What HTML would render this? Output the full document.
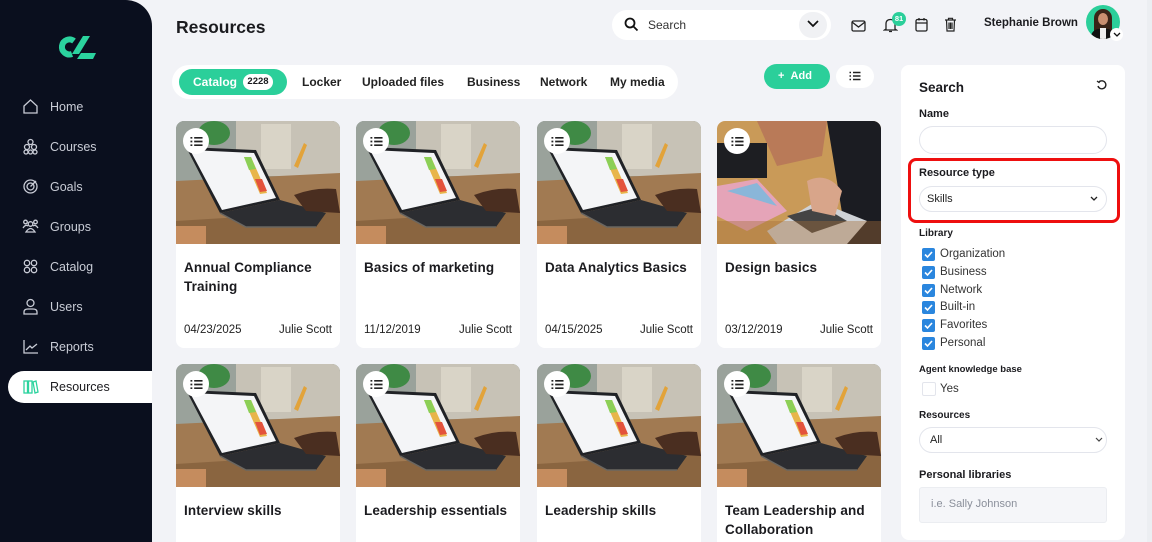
<!DOCTYPE html>
<html style="width:1152px;height:542px;overflow:hidden"><head><meta charset="utf-8">
<style>
*{box-sizing:border-box;margin:0;padding:0}
body{width:1152px;height:542px;overflow:hidden;background:#f2f3f7;font-family:"Liberation Sans",sans-serif;color:#1b1b1f;position:relative}
.side{position:absolute;left:0;top:0;width:152px;height:542px;background:#0a0f1e;border-top-right-radius:26px}
.nav{position:absolute;left:22px;color:#c9ccd6;font-size:12.5px;display:flex;align-items:center;gap:11px}
.nav svg{width:17px;height:17px;stroke:#c9ccd6;fill:none;stroke-width:1.3}
.active{position:absolute;left:8px;top:371px;width:144px;height:32px;background:#fff;border-radius:16px 0 0 16px}
.abs{position:absolute}
.card{position:absolute;width:164px;background:#fff;border-radius:8px;overflow:hidden}
.card .img{height:123px;position:relative}
.card h3{font-size:13.5px;font-weight:bold;line-height:18.5px;padding:15px 8px 0;letter-spacing:0.1px}
.meta{position:absolute;left:8px;right:8px;top:203px;font-size:11.5px;display:flex;justify-content:space-between;color:#222}
.li{position:absolute;left:7px;top:7px;width:26px;height:26px;border-radius:50%;background:#fff;display:flex;align-items:center;justify-content:center}
.tab{position:absolute;top:75px;font-size:12px;font-weight:bold;color:#222}
.lbl{position:absolute;left:919px;font-size:10.5px;font-weight:bold}
.cb{position:absolute;left:922px;width:13px;height:13px;border-radius:2px;background:#2a86de}
.cbt{position:absolute;left:940px;font-size:11.5px;color:#333}
.inp{position:absolute;left:919px;width:188px;border:1px solid #e3e5ec;border-radius:15px;background:#fff}
</style></head><body>
<div class="side">
 <svg class="abs" style="left:55px;top:33px" width="42" height="28" viewBox="0 0 42 28"><path d="M19 8 A7.5 7.5 0 1 0 17 21" fill="none" stroke="#2bd39e" stroke-width="6" stroke-linecap="butt"/><path d="M28 3 L35 3 L24 21 L17 21 Z" fill="#2bd39e"/><path d="M26 20 L41 20 L38 26 L22 26 Z" fill="#2bd39e"/></svg>
 <div class="active"></div>
 <div class="nav" style="top:98px"><svg viewBox="0 0 17 17"><path d="M2 8 L8.5 2 L15 8 V15 H2 Z"/></svg>Home</div>
 <div class="nav" style="top:138px"><svg viewBox="0 0 17 17"><circle cx="8.5" cy="4" r="2.5"/><circle cx="5" cy="9" r="2.5"/><circle cx="12" cy="9" r="2.5"/><circle cx="4" cy="14" r="2"/><circle cx="8.5" cy="14" r="2"/><circle cx="13" cy="14" r="2"/></svg>Courses</div>
 <div class="nav" style="top:178px"><svg viewBox="0 0 17 17"><circle cx="8.5" cy="8.5" r="6.5"/><circle cx="8.5" cy="8.5" r="3.5"/><path d="M8.5 8.5 L14 3"/></svg>Goals</div>
 <div class="nav" style="top:218px"><svg viewBox="0 0 17 17"><circle cx="8.5" cy="6" r="2.3"/><circle cx="3.5" cy="4" r="1.8"/><circle cx="13.5" cy="4" r="1.8"/><path d="M4 14 Q8.5 7 13 14 Z M1 10 Q3.5 6 6 8 M11 8 Q13.5 6 16 10"/></svg>Groups</div>
 <div class="nav" style="top:258px"><svg viewBox="0 0 17 17"><circle cx="5" cy="5" r="2.7"/><circle cx="12" cy="5" r="2.7"/><circle cx="5" cy="12" r="2.7"/><circle cx="12" cy="12" r="2.7"/></svg>Catalog</div>
 <div class="nav" style="top:298px"><svg viewBox="0 0 17 17"><circle cx="8.5" cy="5" r="3.5"/><path d="M2 16 V14 Q2 11 6 11 H11 Q15 11 15 14 V16 Z"/></svg>Users</div>
 <div class="nav" style="top:338px"><svg viewBox="0 0 17 17"><path d="M2 2 V15 H16 M4 12 L8 8 L10 10 L15 6"/></svg>Reports</div>
 <div class="nav" style="top:378px;color:#1b1b1f"><svg viewBox="0 0 17 17" style="stroke:#2bd39e"><rect x="2" y="3" width="3.5" height="12"/><rect x="6.5" y="3" width="3.5" height="12"/><path d="M11 4 L14 3 L16 14 L13 15 Z"/></svg>Resources</div>
</div>

<div class="abs" style="left:176px;top:17px;font-size:17.5px;font-weight:bold">Resources</div>

<div class="abs" style="left:612px;top:10px;width:219px;height:30px;background:#fff;border-radius:15px"></div>
<svg class="abs" style="left:624px;top:17px" width="15" height="15" viewBox="0 0 15 15"><circle cx="6" cy="6" r="4.5" fill="none" stroke="#111" stroke-width="1.8"/><path d="M9.5 9.5 L13.5 13.5" stroke="#111" stroke-width="1.8"/></svg>
<div class="abs" style="left:648px;top:18px;font-size:12px;color:#333">Search</div>
<div class="abs" style="left:799px;top:12px;width:28px;height:26px;border-radius:13px;background:#f0f1f4"></div>
<svg class="abs" style="left:807px;top:20px" width="12" height="8" viewBox="0 0 12 8"><path d="M1 1 L6 6 L11 1" fill="none" stroke="#111" stroke-width="1.7"/></svg>
<svg class="abs" style="left:851px;top:20px" width="15" height="12" viewBox="0 0 15 12"><rect x="1" y="1" width="13" height="10" rx="1.5" fill="none" stroke="#222" stroke-width="1.3"/><path d="M1 2 L7.5 7 L14 2" fill="none" stroke="#222" stroke-width="1.3"/></svg>
<svg class="abs" style="left:883px;top:17px" width="15" height="16" viewBox="0 0 15 16"><path d="M3 12 V7 Q3 2.5 7.5 2.5 Q12 2.5 12 7 V12 L13.5 13 H1.5 Z M6 14.5 H9" fill="none" stroke="#222" stroke-width="1.3"/></svg>
<div class="abs" style="left:892px;top:12px;width:14px;height:14px;border-radius:7px;background:#2bcf9a;color:#fff;font-size:7.5px;font-weight:bold;text-align:center;line-height:14px">81</div>
<svg class="abs" style="left:915px;top:17px" width="13" height="15" viewBox="0 0 13 15"><rect x="1" y="2.5" width="11" height="11.5" rx="1.5" fill="none" stroke="#222" stroke-width="1.3"/><path d="M1 6 H12 M4 1 V3.5 M9 1 V3.5" stroke="#222" stroke-width="1.3"/></svg>
<svg class="abs" style="left:944px;top:17px" width="13" height="15" viewBox="0 0 13 15"><path d="M1 3 H12 M4.5 3 V1.3 H8.5 V3 M2.5 3 L3 14 H10 L10.5 3 M5 5.5 V12 M6.5 5.5 V12 M8 5.5 V12" fill="none" stroke="#222" stroke-width="1.2"/></svg>
<div class="abs" style="left:984px;top:17px;font-size:11.5px;font-weight:bold">Stephanie Brown</div>
<div class="abs" style="left:1086px;top:5px;width:34px;height:34px;border-radius:50%;background:#2bcf9a;overflow:hidden">
 <div style="position:absolute;left:8px;top:4px;width:18px;height:30px;border-radius:9px 9px 0 0;background:#3a2418"></div>
 <div style="position:absolute;left:12px;top:8px;width:10px;height:12px;border-radius:50%;background:#c98f70"></div>
 <div style="position:absolute;left:5px;top:24px;width:24px;height:14px;border-radius:8px 8px 0 0;background:#111"></div>
 <div style="position:absolute;left:14px;top:23px;width:6px;height:12px;background:#eee"></div>
</div>
<div class="abs" style="left:1110px;top:28px;width:13px;height:13px;border-radius:50%;background:#fff"></div>
<svg class="abs" style="left:1113px;top:32px" width="8" height="6" viewBox="0 0 8 6"><path d="M1 1 L4 4 L7 1" fill="none" stroke="#111" stroke-width="1.3"/></svg>

<div class="abs" style="left:172px;top:65px;width:506px;height:34px;background:#fff;border-radius:17px"></div>
<div class="abs" style="left:179px;top:69px;width:108px;height:26px;background:#2bcf9a;border-radius:13px"></div>
<div class="tab" style="left:193px;color:#fff">Catalog</div>
<div class="abs" style="left:243px;top:74px;width:30px;height:16px;background:#fff;border-radius:8px;font-size:9.5px;font-weight:bold;text-align:center;line-height:16px">2228</div>
<div class="tab" style="left:302px">Locker</div>
<div class="tab" style="left:362px">Uploaded files</div>
<div class="tab" style="left:467px">Business</div>
<div class="tab" style="left:540px">Network</div>
<div class="tab" style="left:610px">My media</div>

<div class="abs" style="left:764px;top:64px;width:66px;height:25px;background:#2bcf9a;border-radius:13px;color:#fff;font-size:11px;font-weight:bold;line-height:25px;padding-left:14px">+&nbsp;&nbsp;Add</div>
<div class="abs" style="left:836px;top:65px;width:38px;height:23px;background:#fff;border-radius:12px"></div>
<svg class="abs" style="left:849px;top:71px" width="12" height="10" viewBox="0 0 12 10"><path d="M0.5 1.5 H2 M4 1.5 H11.5 M0.5 5 H2 M4 5 H11.5 M0.5 8.5 H2 M4 8.5 H11.5" stroke="#222" stroke-width="1.4"/></svg>

<svg width="0" height="0" style="position:absolute">
 <defs>
  <symbol id="lap" viewBox="0 0 164 123">
   <rect width="164" height="123" fill="#8e9691"/>
   <rect x="0" y="0" width="164" height="60" fill="#9aa29b"/>
   <rect x="60" y="0" width="104" height="55" fill="#c7c2b6"/>
   <rect x="85" y="3" width="30" height="45" fill="#d9d4c7"/>
   <ellipse cx="38" cy="12" rx="16" ry="12" fill="#3f8a45"/>
   <path d="M0 60 L164 52 L164 123 L0 123 Z" fill="#a17a52"/>
   <path d="M0 100 L164 90 L164 123 L0 123 Z" fill="#8a6540"/>
   <rect x="0" y="105" width="30" height="18" fill="#c58c5e"/>
   <path d="M10 26 L80 29 L104 79 L44 92 Z" fill="#202226"/>
   <path d="M14 29 L78 32 L100 77 L46 89 Z" fill="#f4f5f7"/>
   <path d="M68 36 L75 36 L91 72 L84 73 Z" fill="#e8b54a"/>
   <path d="M68 36 L75 36 L80 48 L73 49 Z" fill="#8ccf56"/>
   <path d="M79 58 L86 58 L91 70 L84 71 Z" fill="#e3533c"/>
   <path d="M44 92 L104 79 L150 92 L140 106 L70 106 Z" fill="#2c2d31"/>
   <path d="M44 92 L70 106 L140 106" fill="none" stroke="#6a6660" stroke-width="1.5"/>
   <path d="M118 74 Q138 66 160 68 L164 92 L130 90 Z" fill="#4a2e20"/>
   <path d="M118 45 L128 22 L131 24 L122 47 Z" fill="#e2a33a"/>
  </symbol>
  <symbol id="lst" viewBox="0 0 14 11"><path d="M0.5 1.5 H2.5 M4.5 1.5 H13.5 M0.5 5.5 H2.5 M4.5 5.5 H13.5 M0.5 9.5 H2.5 M4.5 9.5 H13.5" stroke="#222" stroke-width="1.8"/></symbol>
 </defs>
</svg>

<div class="card" style="left:176px;top:121px;height:227px"><div class="img"><svg width="164" height="123"><use href="#lap" width="164" height="123"/></svg><div class="li"><svg width="13" height="11"><use href="#lst" width="13" height="11"/></svg></div></div><h3>Annual Compliance Training</h3><div class="meta"><span>04/23/2025</span><span>Julie Scott</span></div></div>
<div class="card" style="left:356px;top:121px;height:227px"><div class="img"><svg width="164" height="123"><use href="#lap" width="164" height="123"/></svg><div class="li"><svg width="13" height="11"><use href="#lst" width="13" height="11"/></svg></div></div><h3>Basics of marketing</h3><div class="meta"><span>11/12/2019</span><span>Julie Scott</span></div></div>
<div class="card" style="left:537px;top:121px;height:227px"><div class="img"><svg width="164" height="123"><use href="#lap" width="164" height="123"/></svg><div class="li"><svg width="13" height="11"><use href="#lst" width="13" height="11"/></svg></div></div><h3>Data Analytics Basics</h3><div class="meta"><span>04/15/2025</span><span>Julie Scott</span></div></div>
<div class="card" style="left:717px;top:121px;height:227px"><div class="img">
 <svg width="164" height="123" viewBox="0 0 164 123"><rect width="164" height="123" fill="#c99a58"/><path d="M40 0 H110 L105 35 L60 45 Z" fill="#b97a58"/><path d="M110 0 H164 V123 H130 Q120 60 110 0 Z" fill="#1b1c22"/><path d="M0 65 L40 58 L70 90 L30 110 L0 95 Z" fill="#e5a4b8"/><path d="M10 70 L40 62 L60 85 Z" fill="#8ab6d9"/><rect x="0" y="22" width="50" height="35" fill="#1d1e22"/><path d="M50 110 L100 80 L150 100 L130 123 L60 123 Z" fill="#cfd2d6"/><path d="M70 95 L105 85 L130 100 L95 112 Z" fill="#444"/><path d="M90 60 Q110 50 125 70 L118 95 L95 90 Z" fill="#d8a58a"/><rect x="0" y="100" width="164" height="23" fill="#a56e3a" opacity=".4"/></svg>
 <div class="li"><svg width="13" height="11"><use href="#lst" width="13" height="11"/></svg></div></div><h3>Design basics</h3><div class="meta"><span>03/12/2019</span><span>Julie Scott</span></div></div>

<div class="card" style="left:176px;top:364px;height:178px;border-radius:8px 8px 0 0"><div class="img"><svg width="164" height="123"><use href="#lap" width="164" height="123"/></svg><div class="li"><svg width="13" height="11"><use href="#lst" width="13" height="11"/></svg></div></div><h3>Interview skills</h3></div>
<div class="card" style="left:356px;top:364px;height:178px;border-radius:8px 8px 0 0"><div class="img"><svg width="164" height="123"><use href="#lap" width="164" height="123"/></svg><div class="li"><svg width="13" height="11"><use href="#lst" width="13" height="11"/></svg></div></div><h3>Leadership essentials</h3></div>
<div class="card" style="left:537px;top:364px;height:178px;border-radius:8px 8px 0 0"><div class="img"><svg width="164" height="123"><use href="#lap" width="164" height="123"/></svg><div class="li"><svg width="13" height="11"><use href="#lst" width="13" height="11"/></svg></div></div><h3>Leadership skills</h3></div>
<div class="card" style="left:717px;top:364px;height:178px;border-radius:8px 8px 0 0"><div class="img"><svg width="164" height="123"><use href="#lap" width="164" height="123"/></svg><div class="li"><svg width="13" height="11"><use href="#lst" width="13" height="11"/></svg></div></div><h3>Team Leadership and Collaboration</h3></div>

<div class="abs" style="left:901px;top:65px;width:224px;height:475px;background:#fff;border-radius:8px"></div>
<div class="abs" style="left:919px;top:80px;font-size:13.5px;font-weight:bold">Search</div>
<svg class="abs" style="left:1096px;top:80px" width="11" height="11" viewBox="0 0 11 11"><path d="M3 2 A4 4 0 1 1 2 6" fill="none" stroke="#222" stroke-width="1.4"/><path d="M1 1 L3 2.5 L4.5 0.5" fill="none" stroke="#222" stroke-width="1.3"/></svg>
<div class="lbl" style="top:108px;font-size:11px">Name</div>
<div class="inp" style="top:126px;height:28px"></div>
<div class="abs" style="left:908px;top:158px;width:212px;height:65px;border:3.5px solid #ee0f0f;border-radius:8px"></div>
<div class="lbl" style="top:167px;font-size:11px">Resource type</div>
<div class="inp" style="top:186px;height:26px;font-size:11px;color:#222;padding:6px 0 0 7px">Skills</div>
<svg class="abs" style="left:1090px;top:196px" width="8" height="6" viewBox="0 0 8 6"><path d="M1 1 L4 4 L7 1" fill="none" stroke="#222" stroke-width="1.3"/></svg>
<div class="lbl" style="top:228px;font-size:10px">Library</div>
<div class="cb" style="top:248px"></div><div class="cbt" style="top:248px">Organization</div>
<div class="cb" style="top:266px"></div><div class="cbt" style="top:266px">Business</div>
<div class="cb" style="top:284px"></div><div class="cbt" style="top:284px">Network</div>
<div class="cb" style="top:301px"></div><div class="cbt" style="top:301px">Built-in</div>
<div class="cb" style="top:319px"></div><div class="cbt" style="top:319px">Favorites</div>
<div class="cb" style="top:337px"></div><div class="cbt" style="top:337px">Personal</div>
<svg class="abs" style="left:922px;top:248px" width="13" height="103" viewBox="0 0 13 103"><g fill="none" stroke="#fff" stroke-width="1.6"><path d="M3 6.5 L5.5 9 L10 4"/><path d="M3 24.5 L5.5 27 L10 22"/><path d="M3 42.5 L5.5 45 L10 40"/><path d="M3 59.5 L5.5 62 L10 57"/><path d="M3 77.5 L5.5 80 L10 75"/><path d="M3 95.5 L5.5 98 L10 93"/></g></svg>
<div class="lbl" style="top:364px;font-size:9.5px">Agent knowledge base</div>
<div class="abs" style="left:922px;top:382px;width:14px;height:14px;border:1px solid #e3e5ec;border-radius:2px"></div>
<div class="cbt" style="top:383px">Yes</div>
<div class="lbl" style="top:410px;font-size:10px">Resources</div>
<div class="inp" style="top:427px;height:26px;font-size:11px;color:#222;padding:6px 0 0 10px">All</div>
<svg class="abs" style="left:1095px;top:437px" width="8" height="6" viewBox="0 0 8 6"><path d="M1 1 L4 4 L7 1" fill="none" stroke="#444" stroke-width="1.2"/></svg>
<div class="lbl" style="top:469px;font-size:11px">Personal libraries</div>
<div class="abs" style="left:919px;top:487px;width:188px;height:36px;background:#f5f6f9;border:1px solid #ebedf1;border-radius:3px;font-size:11px;color:#8a8f9a;padding:10px 0 0 11px">i.e. Sally Johnson</div>
<div class="abs" style="left:1147px;top:0;width:5px;height:542px;background:#eceef2"></div>
</body></html>
